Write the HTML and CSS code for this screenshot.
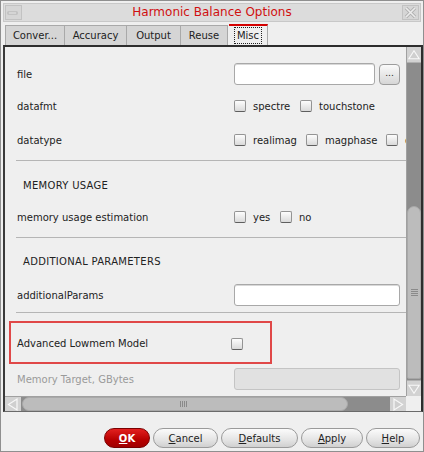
FILE: index.html
```html
<!DOCTYPE html>
<html>
<head>
<meta charset="utf-8">
<link rel="stylesheet" href="styles.css">
</head>
<body>
<div class="window">
  <div class="titlebar">
    <div class="tb-btn">
      <svg width="15" height="13" viewBox="0 0 15 13"><rect x="2" y="6" width="9" height="2" fill="#f4f4f4" stroke="#a8a8a8" stroke-width="0.8"/></svg>
    </div>
    <div class="title">Harmonic Balance Options</div>
    <div class="tb-btn">
      <svg width="15" height="13" viewBox="0 0 15 13"><path d="M3 2 L12 11 M12 2 L3 11" stroke="#b0b0b0" stroke-width="3.2" fill="none"/><path d="M3 2 L12 11 M12 2 L3 11" stroke="#ececec" stroke-width="1.6" fill="none"/></svg>
    </div>
  </div>

  <div class="tabs">
    <div class="tab t1">Conver...</div>
    <div class="tab t2">Accuracy</div>
    <div class="tab t3">Output</div>
    <div class="tab t4">Reuse</div>
    <div class="tab t5 active"><span class="focus">Misc</span></div>
  </div>

  <div class="panel">
    <div class="viewport">
      <div class="form">
        <div class="row r-file">
          <span class="label">file</span>
          <div class="ctrl"><div class="input in-file"></div><div class="dots">...</div></div>
        </div>
        <div class="row r-fmt">
          <span class="label">datafmt</span>
          <div class="ctrl">
            <span class="cb"></span><span class="cbl w-spectre">spectre</span>
            <span class="cb"></span><span class="cbl">touchstone</span>
          </div>
        </div>
        <div class="row r-type">
          <span class="label">datatype</span>
          <div class="ctrl">
            <span class="cb"></span><span class="cbl w-realimag">realimag</span>
            <span class="cb"></span><span class="cbl w-magphase">magphase</span>
            <span class="cb"></span><span class="cbl">dbphase</span>
          </div>
        </div>
        <div class="sep s1"></div>
        <div class="row heading h1">MEMORY USAGE</div>
        <div class="row r-mem">
          <span class="label">memory usage estimation</span>
          <div class="ctrl">
            <span class="cb"></span><span class="cbl w-yes">yes</span>
            <span class="cb"></span><span class="cbl">no</span>
          </div>
        </div>
        <div class="sep s2"></div>
        <div class="row heading h2">ADDITIONAL PARAMETERS</div>
        <div class="row r-add">
          <span class="label">additionalParams</span>
          <div class="ctrl"><div class="input in-wide"></div></div>
        </div>
        <div class="sep s3"></div>
        <div class="highlight">
          <span class="label hl-label">Advanced Lowmem Model</span>
          <span class="cb"></span>
        </div>
        <div class="row r-target">
          <span class="label disabled">Memory Target, GBytes</span>
          <div class="ctrl"><div class="input in-wide in-disabled"></div></div>
        </div>
      </div>
    </div>

    <div class="vscroll">
      <div class="arrow">
        <svg width="15" height="16" viewBox="0 0 15 16"><polygon points="7.5,3.5 13,12 2,12" fill="#cfcfcf" stroke="#f8f8f8" stroke-width="1.2"/></svg>
      </div>
      <div class="vtrack"></div>
      <div class="vthumb">
        <svg class="vgrip" width="7" height="8" viewBox="0 0 7 8"><path d="M0 0.5H7M0 2.5H7M0 4.5H7M0 6.5H7" stroke="#8a8a8a" stroke-width="1"/></svg>
      </div>
      <div class="arrow down">
        <svg width="15" height="16" viewBox="0 0 15 16"><polygon points="2,4 13,4 7.5,12.5" fill="#cfcfcf" stroke="#f8f8f8" stroke-width="1.2"/></svg>
      </div>
    </div>

    <div class="hscroll">
      <div class="harrow">
        <svg width="16" height="15" viewBox="0 0 16 15"><polygon points="3.5,7.5 12,2 12,13" fill="#cfcfcf" stroke="#f8f8f8" stroke-width="1.2"/></svg>
      </div>
      <div class="hthumb">
        <svg width="8" height="6" viewBox="0 0 8 6"><path d="M0.5 0V6M2.5 0V6M4.5 0V6M6.5 0V6" stroke="#8a8a8a" stroke-width="1"/></svg>
      </div>
      <div class="htrack"></div>
      <div class="harrow">
        <svg width="16" height="15" viewBox="0 0 16 15"><polygon points="12.5,7.5 4,2 4,13" fill="#cfcfcf" stroke="#f8f8f8" stroke-width="1.2"/></svg>
      </div>
    </div>
    <div class="corner"></div>
  </div>

  <div class="footer">
    <div class="btn ok"><u>O</u>K</div>
    <div class="btn b-cancel"><u>C</u>ancel</div>
    <div class="btn b-defaults"><u>D</u>efaults</div>
    <div class="btn b-apply"><u>A</u>pply</div>
    <div class="btn b-help"><u>H</u>elp</div>
  </div>
</div>
</body>
</html>
```

FILE: styles.css
```css
* { box-sizing: border-box; }

html, body {
  margin: 0;
  padding: 0;
  background: #efefef;
}

body {
  font-family: "DejaVu Sans", sans-serif;
  font-size: 10px;
  color: #222;
}

.window {
  width: 424px;
  height: 452px;
  border: 1px solid #8f8f8f;
  background: #efefef;
  display: flex;
  flex-direction: column;
  overflow: hidden;
}

/* title bar */
.titlebar {
  margin: 2px 2px 0 2px;
  height: 19px;
  border: 1px solid #c8c8c8;
  background: #dcdcdc;
  display: flex;
  align-items: center;
  padding: 0 1px;
}

.tb-btn {
  width: 17px;
  height: 15px;
  border: 1px solid #c2c2c2;
  background: #d6d6d6;
  display: flex;
  align-items: center;
  justify-content: center;
}

.title {
  flex: 1;
  text-align: center;
  color: #d01010;
  font-size: 12px;
  line-height: 15px;
}

/* tabs */
.tabs {
  display: flex;
  align-items: flex-end;
  margin-top: 2px;
  height: 21px;
  padding-left: 4px;
}

.tab {
  height: 20px;
  background: #d5d5d5;
  border: 1px solid #a9a9a9;
  border-bottom: none;
  border-left: none;
  display: flex;
  align-items: center;
  justify-content: center;
  font-size: 10px;
  color: #222;
}

.t1 { width: 60px; border-left: 1px solid #a9a9a9; }
.t2 { width: 62px; }
.t3 { width: 54px; }
.t4 { width: 47px; }
.t5 { width: 39px; }

.tab.active {
  height: 21px;
  background: #efefef;
  border-top: 2px solid #d40000;
  margin-left: 1px;
}

.focus {
  border: 1px dotted #222;
  padding: 2px 2px 1px 2px;
  line-height: 12px;
}

/* panel */
.panel {
  margin-left: 2px;
  height: 367px;
  border-top: 2px solid #2d2d2d;
  border-left: 2px solid #3a3a3a;
  border-right: 2px solid #2d2d2d;
  border-bottom: 1px solid #6a6a6a;
  display: grid;
  grid-template-columns: 401px 15px;
  grid-template-rows: 349px 15px;
  background: #efefef;
}

.viewport {
  overflow: hidden;
  position: relative;
}

.form {
  width: 460px;
  padding-top: 16px;
}

.row {
  display: flex;
  align-items: center;
  height: 22px;
  padding-left: 12px;
}

.label {
  width: 217px;
  flex: none;
  white-space: nowrap;
}

.ctrl {
  display: flex;
  align-items: center;
}

.r-fmt { margin-top: 10px; }
.r-type { margin-top: 12px; }
.r-mem { margin-top: 10px; }
.r-add { margin-top: 12px; }
.r-target { margin-top: 4px; }

.heading {
  padding-left: 18px;
  letter-spacing: 0.3px;
}
.h1 { margin-top: 13px; }
.h2 { margin-top: 12px; }

.sep {
  height: 1px;
  background: #b5b5b5;
  margin-left: 11px;
  width: 390px;
}
.s1 { margin-top: 9px; }
.s2 { margin-top: 9px; }
.s3 { margin-top: 6px; }

.input {
  height: 22px;
  background: #fff;
  border: 1px solid #a8a8a8;
  border-radius: 3px;
  box-shadow: inset 0 1px 0 #d8d8d8;
}
.in-file { width: 141px; }
.in-wide { width: 166px; }
.in-disabled {
  background: #e1e1e1;
  border-color: #c4c4c4;
  box-shadow: none;
}

.dots {
  width: 21px;
  height: 21px;
  margin-left: 4px;
  border: 1px solid #9c9c9c;
  border-radius: 4px;
  background: linear-gradient(#fafafa, #d6d6d6);
  display: flex;
  align-items: center;
  justify-content: center;
  font-size: 9px;
  line-height: 9px;
  padding-bottom: 2px;
}

.cb {
  display: inline-block;
  width: 12px;
  height: 12px;
  flex: none;
  border: 1px solid #949494;
  border-bottom-color: #5e5e5e;
  border-radius: 2px;
  background: linear-gradient(#fdfdfd, #dadada);
}

.cbl {
  margin-left: 7px;
  margin-right: 10px;
  white-space: nowrap;
}
.w-spectre { width: 37px; }
.w-realimag { width: 43px; }
.w-magphase { width: 51px; }
.w-yes { width: 17px; }

.highlight {
  margin-top: 8px;
  margin-left: 4px;
  width: 263px;
  height: 43px;
  border: 2px solid #e04848;
  display: flex;
  align-items: center;
  padding-left: 6px;
  padding-top: 2px;
}
.hl-label { width: 214px; }

.disabled { color: #9a9a9a; }

/* vertical scrollbar */
.vscroll {
  display: flex;
  flex-direction: column;
  background: #8c8c8c;
  border-left: 1px solid #a0a0a0;
}

.arrow {
  height: 16px;
  background: #d2d2d2;
  border-bottom: 1px solid #b0b0b0;
  display: flex;
}
.arrow.down {
  border-top: 1px solid #b0b0b0;
  border-bottom: none;
}

.vtrack { height: 143px; }

.vthumb {
  height: 173px;
  background: #bcbcbc;
  border: 1px solid #a8a8a8;
  border-radius: 7px 7px 2px 2px;
  display: flex;
  align-items: center;
  justify-content: center;
  margin-bottom: 1px;
}

/* horizontal scrollbar */
.hscroll {
  display: flex;
  background: #8c8c8c;
  border-top: 1px solid #a0a0a0;
}

.harrow {
  width: 16px;
  background: #d2d2d2;
  display: flex;
}

.hthumb {
  width: 326px;
  margin-left: 1px;
  background: #bcbcbc;
  border: 1px solid #a8a8a8;
  border-radius: 7px;
  display: flex;
  align-items: center;
  justify-content: center;
  padding-right: 2px;
}

.htrack { width: 42px; }

.corner { background: #efefef; }

/* footer */
.footer {
  flex: 1;
  display: flex;
  justify-content: flex-end;
  align-items: flex-start;
  gap: 3px;
  padding-top: 16px;
  padding-right: 3px;
}

.btn {
  height: 20px;
  border: 1px solid #9a9a9a;
  border-radius: 10px;
  background: linear-gradient(#fbfbfb, #e4e4e4 60%, #d0d0d0);
  display: flex;
  align-items: center;
  justify-content: center;
  font-size: 10px;
  color: #222;
}
.btn u { text-decoration: underline; }

.ok {
  width: 46px;
  background: linear-gradient(#e22020, #b80000 60%, #a00000);
  border-color: #7a0000;
  color: #fff;
  font-weight: bold;
}
.b-cancel { width: 65px; }
.b-defaults { width: 77px; }
.b-apply { width: 62px; }
.b-help { width: 54px; }
```
